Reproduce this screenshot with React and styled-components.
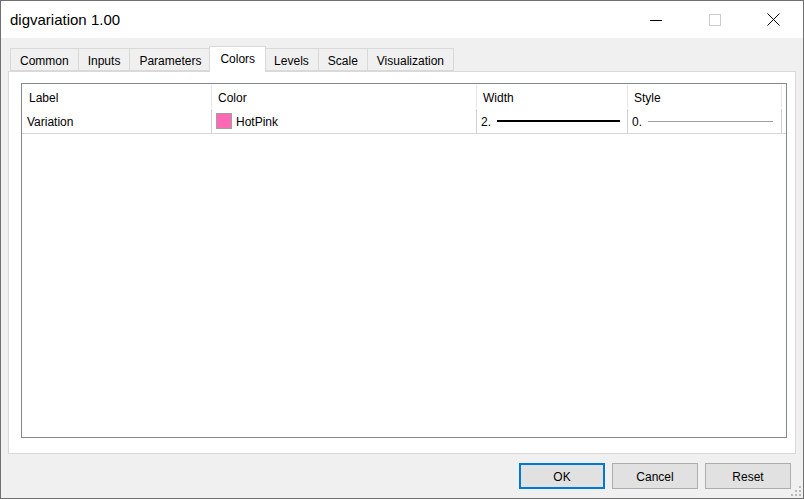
import React from "react";
import styled, { createGlobalStyle } from "styled-components";

const GlobalStyle = createGlobalStyle`
  html, body {
    margin: 0;
    padding: 0;
    background: #ffffff;
  }
  * {
    box-sizing: border-box;
  }
`;

const Window = styled.div`
  position: relative;
  width: 804px;
  height: 499px;
  border: 1px solid #707070;
  background: #f0f0f0;
  display: flex;
  flex-direction: column;
  font-family: "Liberation Sans", Arial, sans-serif;
  font-size: 12px;
  color: #000;
  overflow: hidden;
`;

const TitleBar = styled.div`
  height: 37px;
  flex: 0 0 37px;
  background: #ffffff;
  display: flex;
  align-items: center;
`;

const Title = styled.div`
  flex: 1;
  padding-left: 9px;
  font-size: 15px;
  line-height: 37px;
  color: #000;
`;

const CaptionButton = styled.div`
  width: 59px;
  height: 37px;
  display: flex;
  align-items: center;
  justify-content: center;
`;

const Main = styled.div`
  flex: 1;
  display: flex;
  flex-direction: column;
  padding: 8px 7px 0 7px;
`;

const TabRow = styled.div`
  height: 25px;
  flex: 0 0 25px;
  display: flex;
  align-items: flex-end;
  padding-left: 3px;
`;

const Tab = styled.div`
  position: relative;
  height: ${(p) => (p.active ? "26px" : "23px")};
  margin-bottom: ${(p) => (p.active ? "-1px" : "0")};
  margin-left: ${(p) => (p.active ? "-2px" : "-1px")};
  margin-right: ${(p) => (p.active ? "-1px" : "0")};
  padding: ${(p) => (p.active ? "2px 10px 0 10px" : "2px 9px 0 9px")};
  line-height: 20px;
  border: 1px solid #d9d9d9;
  border-bottom: ${(p) => (p.active ? "none" : "1px solid #d9d9d9")};
  background: ${(p) => (p.active ? "#ffffff" : "#f0f0f0")};
  z-index: ${(p) => (p.active ? 2 : 1)};
  white-space: nowrap;
`;

const Panel = styled.div`
  height: 383px;
  flex: 0 0 383px;
  background: #ffffff;
  border: 1px solid #d9d9d9;
  padding: 11px 11px 15px 12px;
  display: flex;
`;

const ListView = styled.div`
  flex: 1;
  border: 1px solid #828790;
  background: #ffffff;
  display: flex;
  flex-direction: column;
`;

const COLS = "190px 265px 151px 154px";

const HeaderRow = styled.div`
  display: grid;
  grid-template-columns: ${COLS};
  height: 25px;
`;

const HeaderCell = styled.div`
  margin-top: 1px;
  height: 23px;
  padding: 2px 0 0 ${(p) => p.pad || 6}px;
  line-height: 22px;
  border-right: 1px solid #e5e5e5;
  white-space: nowrap;
`;

const DataRow = styled.div`
  display: grid;
  grid-template-columns: ${COLS} 1fr;
  height: 25px;
  border-bottom: 1px solid #d5d5d5;
`;

const DataCell = styled.div`
  display: flex;
  align-items: center;
  height: 24px;
  line-height: 22px;
  padding: 1px ${(p) => p.padRight || 0}px 0 ${(p) => p.pad || 4}px;
  border-right: ${(p) => (p.last ? "none" : "1px solid #d0d0d0")};
  white-space: nowrap;
`;

const Swatch = styled.span`
  width: 16px;
  height: 16px;
  flex: 0 0 16px;
  border: 1px solid #a0a0a0;
  background: ${(p) => p.color};
  margin-right: 4px;
  margin-top: -1px;
`;

const LineSample = styled.span`
  flex: 1;
  height: ${(p) => p.thickness}px;
  background: ${(p) => p.color};
  margin-left: 6px;
  margin-top: ${(p) => p.offset || 0}px;
`;

const Footer = styled.div`
  height: 44px;
  flex: 0 0 44px;
  display: flex;
  align-items: center;
  justify-content: flex-end;
  gap: 7px;
  padding-right: 5px;
`;

const Button = styled.div`
  width: 86px;
  height: 26px;
  padding-top: 1px;
  background: #e1e1e1;
  border: ${(p) => (p.primary ? "2px solid #0078d7" : "1px solid #adadad")};
  display: flex;
  align-items: center;
  justify-content: center;
  font-size: 12px;
  line-height: 1;
`;

const Grip = styled.svg`
  position: absolute;
  right: 1px;
  bottom: 1px;
`;

const tabs = ["Common", "Inputs", "Parameters", "Colors", "Levels", "Scale", "Visualization"];

export default function App() {
  return (
    <>
      <GlobalStyle />
      <Window>
        <TitleBar>
          <Title>digvariation 1.00</Title>
          <CaptionButton>
            <svg width="12" height="12" viewBox="0 0 12 12">
              <line x1="0" y1="6.5" x2="12" y2="6.5" stroke="#000" strokeWidth="1" />
            </svg>
          </CaptionButton>
          <CaptionButton>
            <svg width="12" height="12" viewBox="0 0 12 12">
              <rect x="0.5" y="0.5" width="11" height="11" fill="none" stroke="#cccccc" strokeWidth="1" />
            </svg>
          </CaptionButton>
          <CaptionButton>
            <svg width="13" height="13" viewBox="0 0 13 13">
              <path d="M0.5 0.5 L12.5 12.5 M12.5 0.5 L0.5 12.5" stroke="#000" strokeWidth="1" />
            </svg>
          </CaptionButton>
        </TitleBar>
        <Main>
          <TabRow>
            {tabs.map((t) => (
              <Tab key={t} active={t === "Colors"}>
                {t}
              </Tab>
            ))}
          </TabRow>
          <Panel>
            <ListView>
              <HeaderRow>
                <HeaderCell pad={7}>Label</HeaderCell>
                <HeaderCell>Color</HeaderCell>
                <HeaderCell>Width</HeaderCell>
                <HeaderCell>Style</HeaderCell>
              </HeaderRow>
              <DataRow>
                <DataCell pad={5}>Variation</DataCell>
                <DataCell>
                  <Swatch color="#ff69b4" />
                  HotPink
                </DataCell>
                <DataCell padRight={7}>
                  2.
                  <LineSample thickness={2} color="#000" offset={-1} />
                </DataCell>
                <DataCell padRight={8}>
                  0.
                  <LineSample thickness={1} color="#a0a0a0" offset={0} />
                </DataCell>
                <DataCell last />
              </DataRow>
            </ListView>
          </Panel>
          <Footer>
            <Button primary>OK</Button>
            <Button>Cancel</Button>
            <Button>Reset</Button>
          </Footer>
        </Main>
        <Grip width="12" height="12" viewBox="0 0 12 12">
          <g fill="#b8b8b8">
            <rect x="9" y="1" width="2" height="2" />
            <rect x="5" y="5" width="2" height="2" />
            <rect x="9" y="5" width="2" height="2" />
            <rect x="1" y="9" width="2" height="2" />
            <rect x="5" y="9" width="2" height="2" />
            <rect x="9" y="9" width="2" height="2" />
          </g>
        </Grip>
      </Window>
    </>
  );
}
